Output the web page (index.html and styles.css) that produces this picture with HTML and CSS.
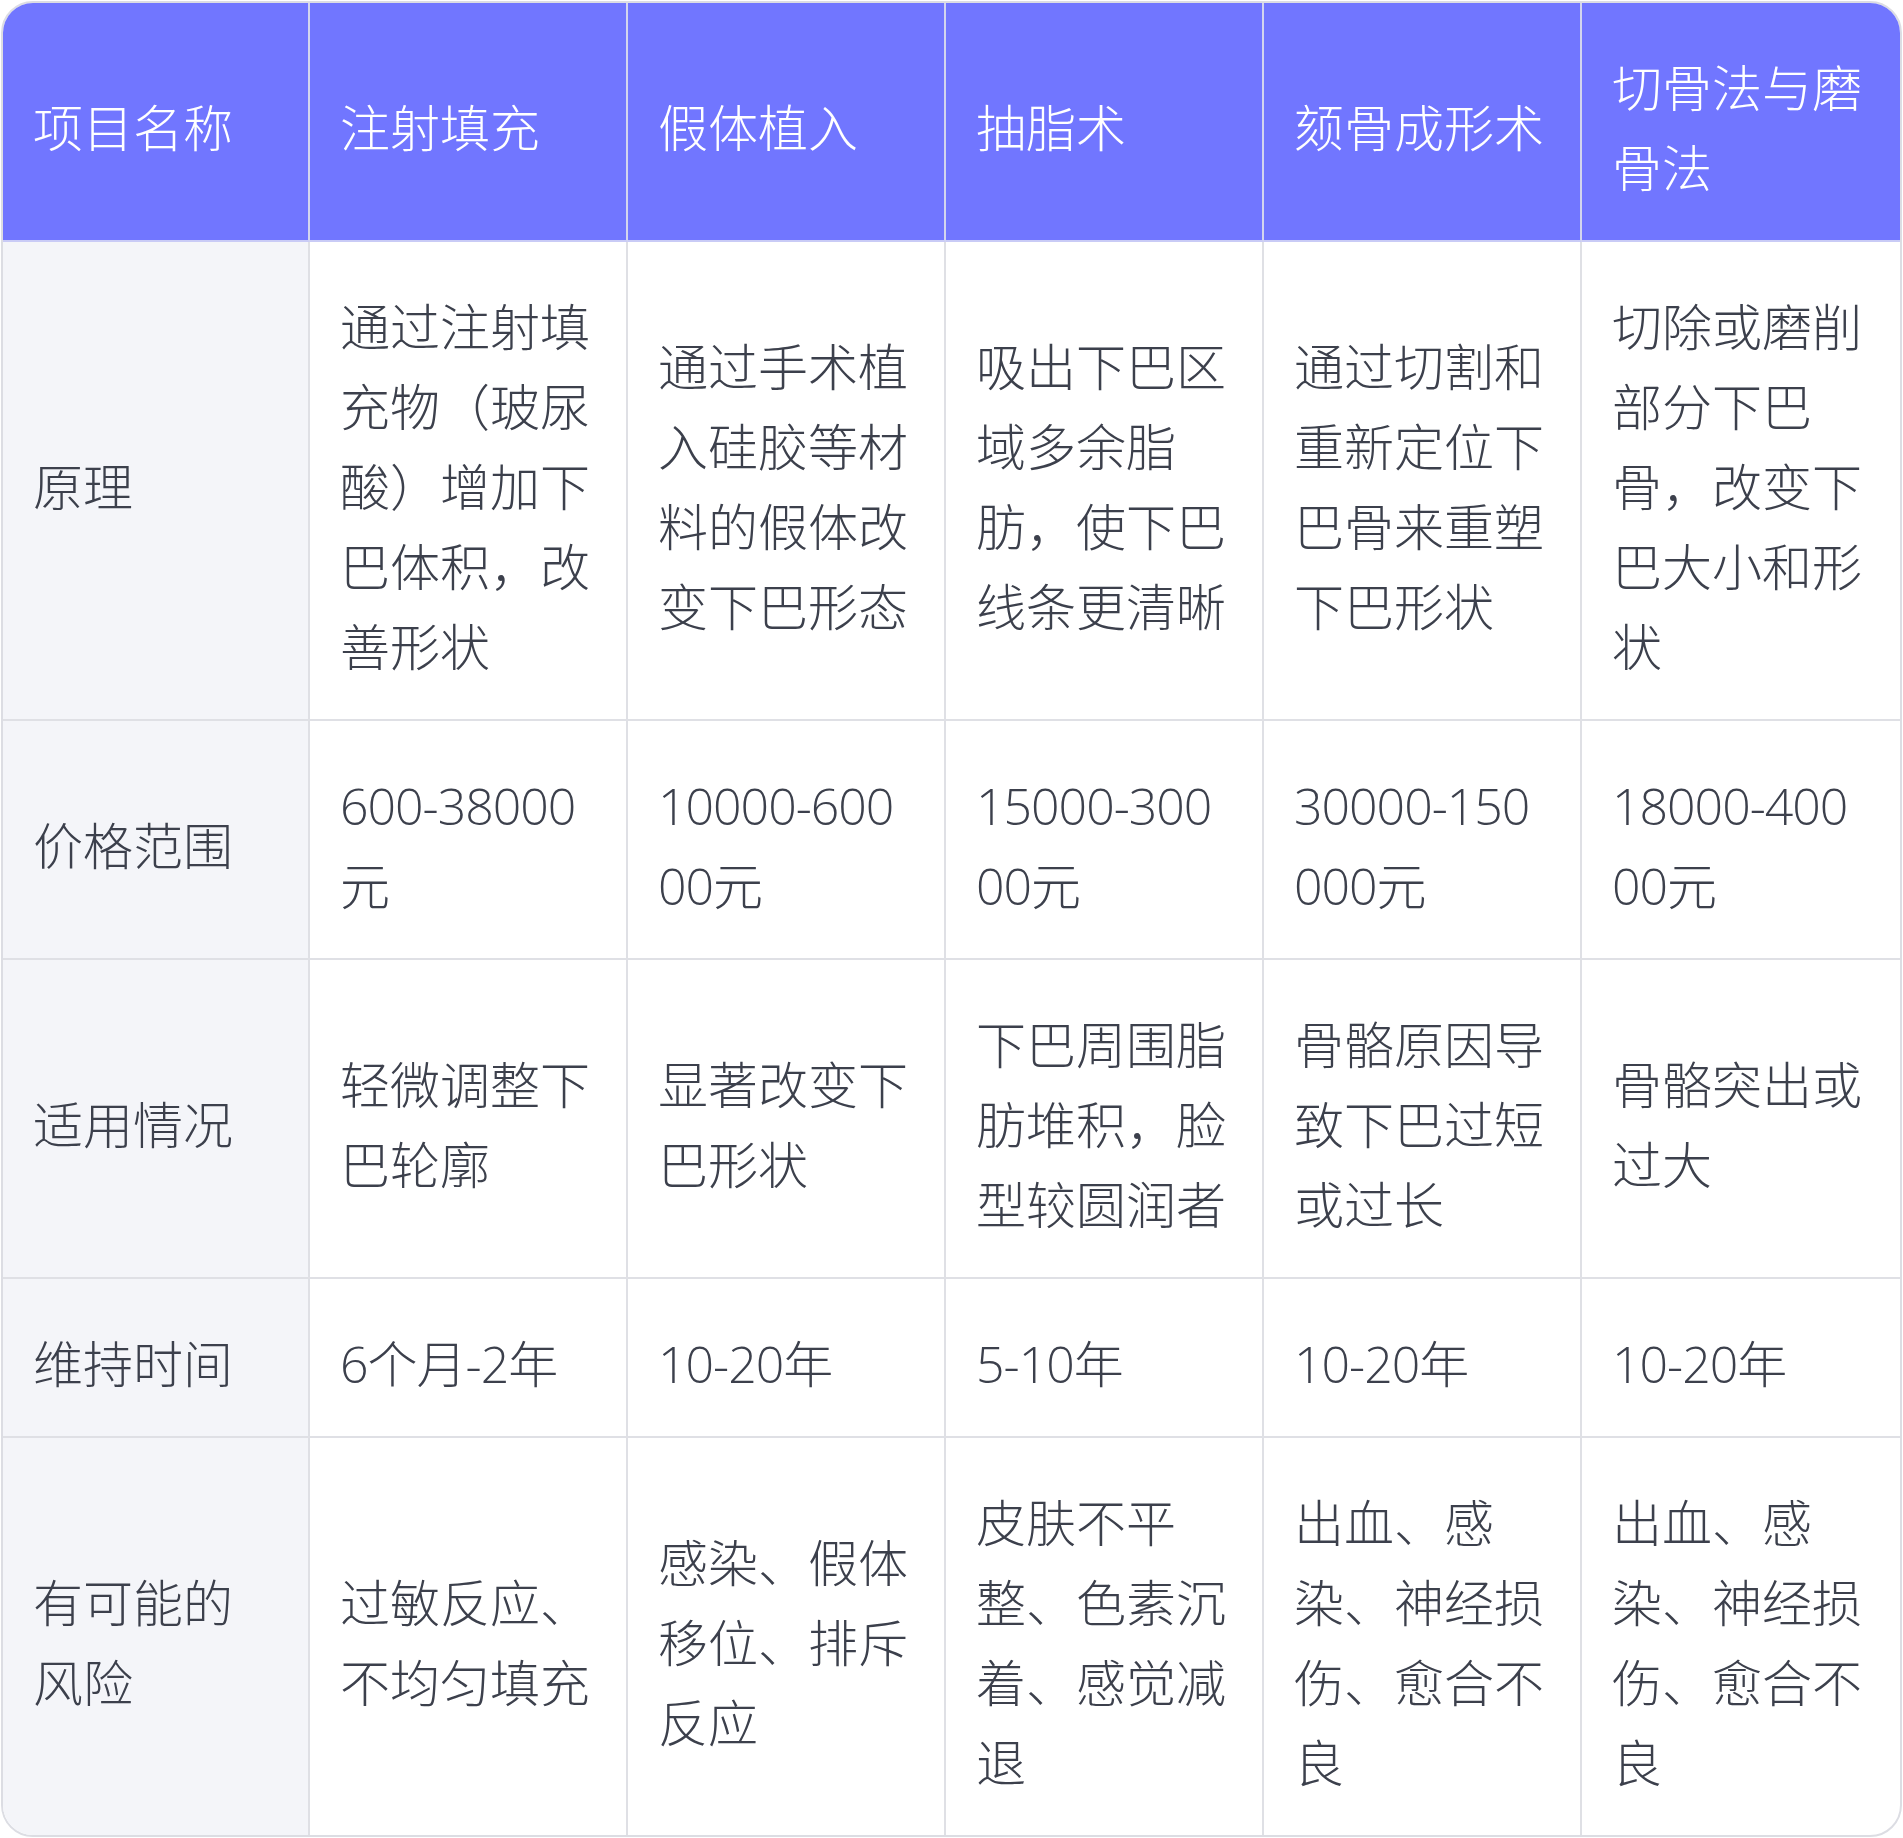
FILE: index.html
```html
<!DOCTYPE html>
<html lang="zh-CN">
<head>
<meta charset="utf-8">
<title>下巴整形项目对比</title>
<link rel="stylesheet" href="styles.css">
</head>
<body>
<div class="wrap">
  <table class="cmp">
    <colgroup>
      <col class="c-first">
      <col><col><col><col><col>
    </colgroup>
    <thead>
      <tr>
        <th>项目名称</th>
        <th>注射填充</th>
        <th>假体植入</th>
        <th>抽脂术</th>
        <th>颏骨成形术</th>
        <th>切骨法与磨骨法</th>
      </tr>
    </thead>
    <tbody>
      <tr>
        <td class="label">原理</td>
        <td>通过注射填充物（玻尿酸）增加下巴体积，改善形状</td>
        <td>通过手术植入硅胶等材料的假体改变下巴形态</td>
        <td>吸出下巴区域多余脂肪，使下巴线条更清晰</td>
        <td>通过切割和重新定位下巴骨来重塑下巴形状</td>
        <td>切除或磨削部分下巴骨，改变下巴大小和形状</td>
      </tr>
      <tr>
        <td class="label">价格范围</td>
        <td class="num">600-38000元</td>
        <td class="num">10000-60000元</td>
        <td class="num">15000-30000元</td>
        <td class="num">30000-150000元</td>
        <td class="num">18000-40000元</td>
      </tr>
      <tr>
        <td class="label">适用情况</td>
        <td>轻微调整下巴轮廓</td>
        <td>显著改变下巴形状</td>
        <td>下巴周围脂肪堆积，脸型较圆润者</td>
        <td>骨骼原因导致下巴过短或过长</td>
        <td>骨骼突出或过大</td>
      </tr>
      <tr>
        <td class="label">维持时间</td>
        <td class="num">6个月-2年</td>
        <td class="num">10-20年</td>
        <td class="num">5-10年</td>
        <td class="num">10-20年</td>
        <td class="num">10-20年</td>
      </tr>
      <tr>
        <td class="label">有可能的风险</td>
        <td>过敏反应、不均匀填充</td>
        <td>感染、假体移位、排斥反应</td>
        <td>皮肤不平整、色素沉着、感觉减退</td>
        <td>出血、感染、神经损伤、愈合不良</td>
        <td>出血、感染、神经损伤、愈合不良</td>
      </tr>
    </tbody>
  </table>
</div>
</body>
</html>
```

FILE: styles.css
```css
html, body {
  margin: 0;
  padding: 0;
  background: #ffffff;
}

.wrap {
  margin: 1px;
  border: 2px solid #dcdde3;
  border-radius: 32px;
  overflow: hidden;
  background: #ffffff;
}

.cmp {
  width: 100%;
  table-layout: fixed;
  border-collapse: separate;
  border-spacing: 0;
  font-family: "Open Sans", "Noto Sans CJK SC", sans-serif;
  font-weight: 300;
  font-size: 50px;
  line-height: 80px;
  color: #3c404c;
}

.c-first {
  width: 307px;
}

.cmp th,
.cmp td {
  padding: 45px 30px 32px 30px;
  text-align: left;
  vertical-align: middle;
  word-break: break-all;
  border-right: 2px solid #dfe0e5;
  border-bottom: 2px solid #dfe0e5;
}

.cmp td.num {
  letter-spacing: -1px;
}

.cmp th:last-child,
.cmp td:last-child {
  border-right: none;
}

.cmp tbody tr:last-child td {
  border-bottom: none;
}

.cmp th {
  background: #7176ff;
  color: #ffffff;
  font-weight: 300;
  border-right-color: #d3d5ee;
  border-bottom-color: #c9cbf6;
}

.cmp td.label {
  background: #f4f5f9;
}
```
